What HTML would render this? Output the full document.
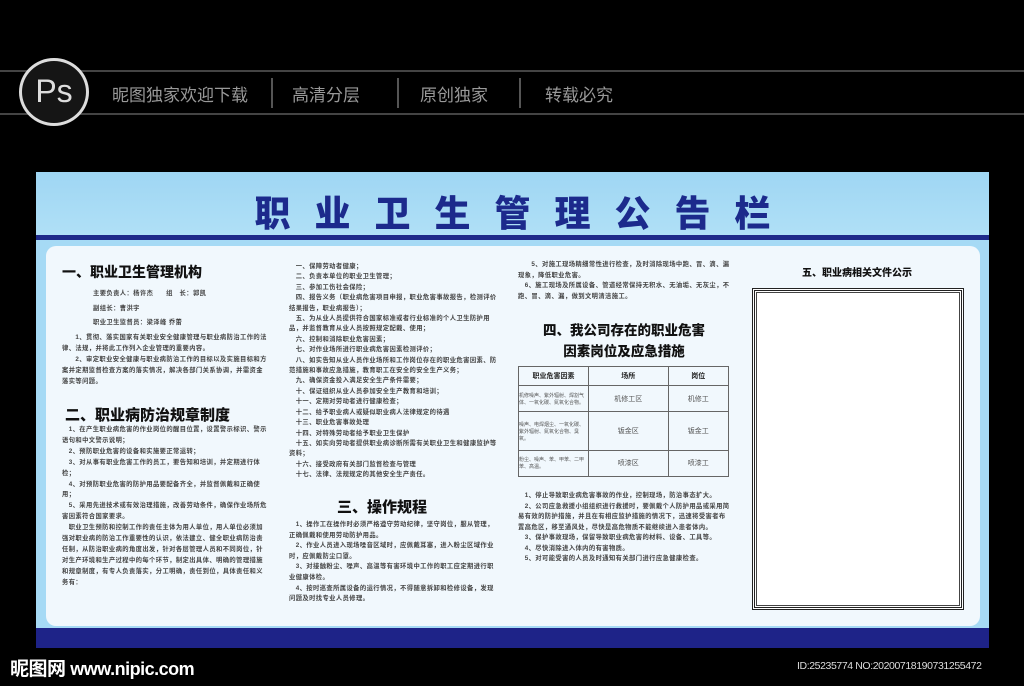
<!DOCTYPE html><html><head><meta charset="utf-8"><style>
*{margin:0;padding:0;box-sizing:border-box}
body{width:1024px;height:686px;background:#000;position:relative;overflow:hidden;font-family:"Liberation Sans","Noto Sans CJK SC",sans-serif}
.a{position:absolute}
.t{font-size:6.3px;line-height:13.6px;color:#444;font-weight:bold;letter-spacing:.4px}
.h{font-weight:900;color:#111}
.m{position:absolute;top:81px;color:#999;font-size:17px;white-space:nowrap}
.s{position:absolute;top:78px;width:2px;height:30px;background:#555}
table{border-collapse:collapse}
td{border:1px solid #666;font-size:7px;color:#555;text-align:center}
</style></head><body>
<div class="a" style="left:0;top:70px;width:1024px;height:2px;background:#444"></div>
<div class="a" style="left:0;top:113px;width:1024px;height:2px;background:#444"></div>
<div class="a" style="left:19px;top:58px;width:70px;height:68px;border-radius:50%;border:3px solid #ddd;background:#151515;color:#ddd;font-size:32px;text-align:center;line-height:60px">Ps</div>
<div class="m" style="left:112px">昵图独家欢迎下载</div>
<div class="s" style="left:271px"></div>
<div class="m" style="left:292px">高清分层</div>
<div class="s" style="left:397px"></div>
<div class="m" style="left:420px">原创独家</div>
<div class="s" style="left:519px"></div>
<div class="m" style="left:545px">转载必究</div>

<div class="a" style="left:36px;top:172px;width:953px;height:476px;background:#a6daf5"></div>
<div class="a" style="left:36px;top:172px;width:953px;height:64px;background:linear-gradient(#9fd6f3,#b0e0f7)"></div>
<div class="a" style="left:36px;top:185px;width:953px;text-align:center;font-size:36px;font-weight:900;color:#1c2a8c;letter-spacing:24px;text-indent:24px">职业卫生管理公告栏</div>
<div class="a" style="left:36px;top:235px;width:953px;height:5px;background:#1e2a8a"></div>
<div class="a" style="left:46px;top:246px;width:934px;height:380px;background:#f1f8fd;border-radius:10px"></div>
<div class="a" style="left:36px;top:628px;width:953px;height:20px;background:#1e2388"></div>

<div class="a" style="left:62px;top:262px;font-size:14px" ><span class="h">一、职业卫生管理机构</span></div>
<div class="a t" style="left:93px;top:287px;line-height:14.5px">主要负责人：杨许杰&nbsp;&nbsp;&nbsp;&nbsp;&nbsp;&nbsp;组　长：郭凯<br>副组长：曹洪宇<br>职业卫生监督员：梁泽峰 乔蕾</div>
<div class="a t" style="left:62px;top:332px;width:205px;line-height:11px">　　1、贯彻、落实国家有关职业安全健康管理与职业病防治工作的法律、法规，并将此工作列入企业管理的重要内容。<br>　　2、审定职业安全健康与职业病防治工作的目标以及实施目标和方案并定期监督检查方案的落实情况，解决各部门关系协调，并需资金落实等问题。</div>
<div class="a" style="left:65px;top:404px;font-size:15px"><span class="h">二、职业病防治规章制度</span></div>
<div class="a t" style="left:62px;top:425px;width:205px;line-height:10.9px">　1、在产生职业病危害的作业岗位的醒目位置，设置警示标识、警示语句和中文警示说明；<br>　2、预防职业危害的设备和实施要正常运转；<br>　3、对从事有职业危害工作的员工，要告知和培训，并定期进行体检；<br>　4、对预防职业危害的防护用品要配备齐全，并监督佩戴和正确使用；<br>　5、采用先进技术或有效治理措施，改善劳动条件，确保作业场所危害因素符合国家要求。<br>　职业卫生预防和控制工作的责任主体为用人单位，用人单位必须加强对职业病的防治工作重要性的认识，依法建立、健全职业病防治责任制，从防治职业病的角度出发，针对各层管理人员和不同岗位，针对生产环境和生产过程中的每个环节，制定出具体、明确的管理措施和规章制度，有专人负责落实，分工明确，责任到位，具体责任和义务有：</div>

<div class="a t" style="left:289px;top:262px;width:208px;line-height:10.4px">　一、保障劳动者健康；<br>　二、负责本单位的职业卫生管理；<br>　三、参加工伤社会保险；<br>　四、报告义务（职业病危害项目申报，职业危害事故报告，检测评价结果报告，职业病报告）；<br>　五、为从业人员提供符合国家标准或者行业标准的个人卫生防护用品，并监督教育从业人员按照规定配戴、使用；<br>　六、控制和消除职业危害因素；<br>　七、对作业场所进行职业病危害因素检测评价；<br>　八、如实告知从业人员作业场所和工作岗位存在的职业危害因素、防范措施和事故应急措施，教育职工在安全的安全生产义务；<br>　九、确保资金投入满足安全生产条件需要；<br>　十、保证组织从业人员参加安全生产教育和培训；<br>　十一、定期对劳动者进行健康检查；<br>　十二、给予职业病人或疑似职业病人法律规定的待遇<br>　十三、职业危害事故处理<br>　十四、对特殊劳动者给予职业卫生保护<br>　十五、如实向劳动者提供职业病诊断所需有关职业卫生和健康监护等资料；<br>　十六、接受政府有关部门监督检查与管理<br>　十七、法律、法规规定的其他安全生产责任。</div>
<div class="a" style="left:337px;top:496px;font-size:15px"><span class="h">三、操作规程</span></div>
<div class="a t" style="left:289px;top:520px;width:208px;line-height:10.6px">　1、操作工在操作时必须严格遵守劳动纪律，坚守岗位，服从管理，正确佩戴和使用劳动防护用品。<br>　2、作业人员进入现场噪音区域时，应佩戴耳塞，进入粉尘区域作业时，应佩戴防尘口罩。<br>　3、对接触粉尘、噪声、高温等有害环境中工作的职工应定期进行职业健康体检。<br>　4、按时巡查所属设备的运行情况，不得随意拆卸和检修设备，发现问题及时找专业人员修理。</div>

<div class="a t" style="left:518px;top:260px;width:212px;line-height:10.5px">　　5、对施工现场精细常性进行检查，及时消除现场中跑、冒、滴、漏现象，降低职业危害。<br>　6、施工现场及所属设备、管道经常保持无积水、无油垢、无灰尘，不跑、冒、滴、漏，做到文明清洁施工。</div>
<div class="a" style="left:518px;top:320px;width:212px;text-align:center;font-size:13.5px;line-height:21px"><span class="h">四、我公司存在的职业危害<br>因素岗位及应急措施</span></div>
<table class="a" style="left:518px;top:366px;width:211px;height:111px">
<tr style="height:19px"><td style="width:70px;font-weight:bold;color:#222">职业危害因素</td><td style="font-weight:bold;color:#222">场所</td><td style="font-weight:bold;color:#222">岗位</td></tr>
<tr><td style="font-size:5px;text-align:left">机修噪声、紫外辐射、焊割气体、一氧化碳、氮氧化合物。</td><td>机修工区</td><td>机修工</td></tr>
<tr><td style="font-size:5px;text-align:left">噪声、电焊烟尘、一氧化碳、紫外辐射、氮氧化合物、臭氧。</td><td>钣金区</td><td>钣金工</td></tr>
<tr><td style="font-size:5px;text-align:left">粉尘、噪声、苯、甲苯、二甲苯、高温。</td><td>喷漆区</td><td>喷漆工</td></tr>
</table>
<div class="a t" style="left:518px;top:491px;width:212px;line-height:10.5px">　1、停止导致职业病危害事故的作业，控制现场，防治事态扩大。<br>　2、公司应急救援小组组织进行救援时，要佩戴个人防护用品或采用简易有效的防护措施，并且在有相应监护措施的情况下，迅速将受害者布置高危区，移至通风处，尽快是高危物质不能继续进入患者体内。<br>　3、保护事故现场，保留导致职业病危害的材料、设备、工具等。<br>　4、尽快消除进入体内的有害物质。<br>　5、对可能受害的人员及时通知有关部门进行应急健康检查。</div>

<div class="a" style="left:751px;top:264px;width:212px;text-align:center;font-size:10px"><span class="h">五、职业病相关文件公示</span></div>
<div class="a" style="left:752px;top:288px;width:212px;height:322px;border:3px double #222;background:#fff"></div>
<div class="a" style="left:756px;top:292px;width:204px;height:314px;border:1px solid #444"></div>

<div class="a" style="left:10px;top:654px;color:#fff;font-size:19px;font-weight:bold;letter-spacing:-0.5px">昵图网 <span style="font-size:18px">www.nipic.com</span></div>
<div class="a" style="left:797px;top:660px;color:#ddd;font-size:10.5px;letter-spacing:-0.4px">ID:25235774 NO:20200718190731255472</div>
</body></html>
